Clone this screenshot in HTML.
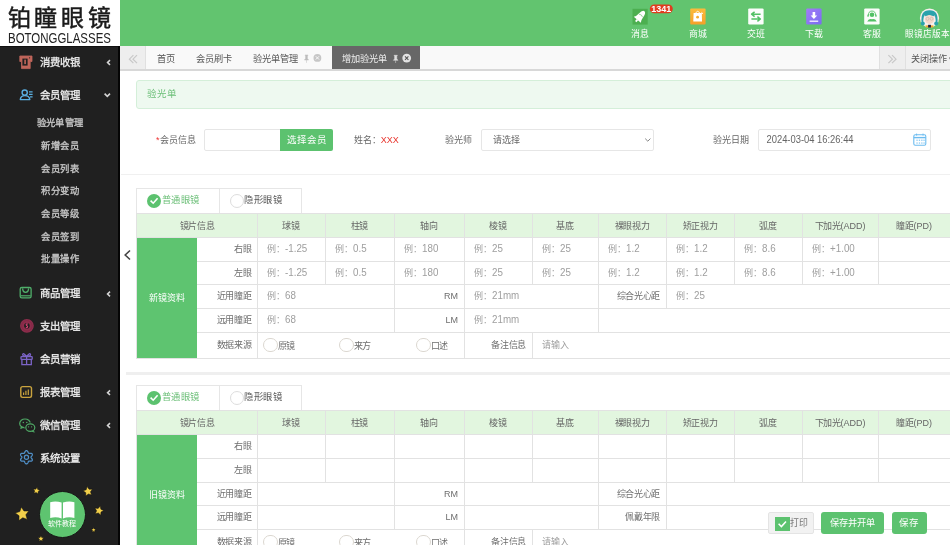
<!DOCTYPE html>
<html lang="zh-CN"><head><meta charset="utf-8">
<style>
*{box-sizing:border-box;margin:0;padding:0}
html,body{width:950px;height:545px;overflow:hidden;background:#fff;font-family:"Liberation Sans",sans-serif;position:relative}
.t{position:absolute;line-height:20px;white-space:nowrap}
.b{position:absolute}
svg{position:absolute;overflow:visible}
#wrap{position:absolute;left:0;top:0;width:950px;height:545px;overflow:hidden;will-change:transform}
</style></head><body><div id="wrap">
<div class="b" style="left:0px;top:0px;width:120px;height:46px;background:#fff"></div>
<div class="t" style="left:7.5px;top:2px;font-size:23px;line-height:32px;letter-spacing:3.9px;color:#1b1b1b;-webkit-text-stroke:0.5px #1b1b1b">铂瞳眼镜</div>
<div class="t" style="left:8px;top:31px;font-size:14.5px;line-height:14px;color:#222;transform-origin:0 0;transform:scaleX(0.79)">BOTONGGLASSES</div>
<div class="b" style="left:0px;top:46px;width:118px;height:499px;background:#202020"></div>
<div class="b" style="left:118px;top:46px;width:2px;height:499px;background:#050505"></div>
<div class="b" style="left:0px;top:46px;width:118px;height:1px;background:#111"></div>
<div class="t" style="left:39.8px;top:53.1px;font-size:10.4px;color:#e2e2e2;font-weight:bold;">消费收银</div>
<div class="t" style="left:39.8px;top:86.0px;font-size:10.4px;color:#e2e2e2;font-weight:bold;">会员管理</div>
<div class="t" style="left:-89.8px;width:300px;text-align:center;top:113.2px;font-size:9.3px;color:#c8c8c8;font-weight:400;letter-spacing:0.45px;-webkit-text-stroke:0.3px #c8c8c8">验光单管理</div>
<div class="t" style="left:-89.8px;width:300px;text-align:center;top:135.9px;font-size:9.3px;color:#c8c8c8;font-weight:400;letter-spacing:0.45px;-webkit-text-stroke:0.3px #c8c8c8">新增会员</div>
<div class="t" style="left:-89.8px;width:300px;text-align:center;top:158.6px;font-size:9.3px;color:#c8c8c8;font-weight:400;letter-spacing:0.45px;-webkit-text-stroke:0.3px #c8c8c8">会员列表</div>
<div class="t" style="left:-89.8px;width:300px;text-align:center;top:181.3px;font-size:9.3px;color:#c8c8c8;font-weight:400;letter-spacing:0.45px;-webkit-text-stroke:0.3px #c8c8c8">积分变动</div>
<div class="t" style="left:-89.8px;width:300px;text-align:center;top:204.0px;font-size:9.3px;color:#c8c8c8;font-weight:400;letter-spacing:0.45px;-webkit-text-stroke:0.3px #c8c8c8">会员等级</div>
<div class="t" style="left:-89.8px;width:300px;text-align:center;top:226.7px;font-size:9.3px;color:#c8c8c8;font-weight:400;letter-spacing:0.45px;-webkit-text-stroke:0.3px #c8c8c8">会员签到</div>
<div class="t" style="left:-89.8px;width:300px;text-align:center;top:249.39999999999998px;font-size:9.3px;color:#c8c8c8;font-weight:400;letter-spacing:0.45px;-webkit-text-stroke:0.3px #c8c8c8">批量操作</div>
<div class="t" style="left:39.8px;top:284.1px;font-size:10.4px;color:#e2e2e2;font-weight:bold;">商品管理</div>
<div class="t" style="left:39.8px;top:317.0px;font-size:10.4px;color:#e2e2e2;font-weight:bold;">支出管理</div>
<div class="t" style="left:39.8px;top:349.90000000000003px;font-size:10.4px;color:#e2e2e2;font-weight:bold;">会员营销</div>
<div class="t" style="left:39.8px;top:382.8px;font-size:10.4px;color:#e2e2e2;font-weight:bold;">报表管理</div>
<div class="t" style="left:39.8px;top:415.70000000000005px;font-size:10.4px;color:#e2e2e2;font-weight:bold;">微信管理</div>
<div class="t" style="left:39.8px;top:448.6px;font-size:10.4px;color:#e2e2e2;font-weight:bold;">系统设置</div>
<svg style="left:0;top:0" width="120" height="545"><path d="M19.8 56 H32 V61.5 H30.2 V68.6 H21.5 V61.5 H19.8 Z" fill="#bf655a" stroke="#bf655a" stroke-width="0.8" stroke-linejoin="round"/><rect x="22.4" y="58.6" width="5.2" height="7" fill="#202020"/><rect x="24.3" y="59.6" width="1.6" height="4.5" fill="#bf655a"/><circle cx="29.6" cy="57.8" r="0.6" fill="#202020"/><circle cx="24.7" cy="92.6" r="2.6" fill="none" stroke="#5aaee0" stroke-width="1.4"/><path d="M20.3 99.6 Q20.6 95.6 24.9 95.6 Q29.4 95.6 29.8 99.6 Z" fill="none" stroke="#5aaee0" stroke-width="1.4" stroke-linejoin="round"/><path d="M29 91.8 H32.6 M29 94.4 H32.6 M30 96.8 H32.6" stroke="#5aaee0" stroke-width="1.2"/><path d="M110 60.2 L107.6 62.5 L110 64.8" fill="none" stroke="#d4d4d4" stroke-width="1.6"/><path d="M110 291.7 L107.6 294 L110 296.3" fill="none" stroke="#d4d4d4" stroke-width="1.6"/><path d="M110 390.4 L107.6 392.7 L110 395.0" fill="none" stroke="#d4d4d4" stroke-width="1.6"/><path d="M110 423.2 L107.6 425.5 L110 427.8" fill="none" stroke="#d4d4d4" stroke-width="1.6"/><path d="M104.6 93.6 L107.3 96.4 L110 93.6" fill="none" stroke="#d4d4d4" stroke-width="1.6"/><rect x="20.2" y="287.5" width="10.9" height="10.4" rx="1.6" fill="none" stroke="#4fae6a" stroke-width="1.3"/><path d="M22.6 288.4 Q22.8 292.3 25.6 292.3 Q28.4 292.3 28.6 288.4" fill="none" stroke="#4fae6a" stroke-width="1.3"/><path d="M20.8 295.8 H30.6" stroke="#4fae6a" stroke-width="1.2"/><circle cx="26.9" cy="325.8" r="6.9" fill="#8e2d4c"/><circle cx="26.9" cy="325.8" r="5.2" fill="none" stroke="#7a2642" stroke-width="0.6"/><circle cx="26.9" cy="325.8" r="2.8" fill="#202020"/><path d="M27.8 324.2 Q26.9 323.6 26.2 324.3 Q26 325.4 27.2 325.9 Q28 326.6 27.4 327.4 Q26.6 327.9 25.9 327.3" fill="none" stroke="#d04070" stroke-width="1.1"/><rect x="21" y="356.6" width="11.2" height="2.8" rx="0.6" fill="none" stroke="#7c64c8" stroke-width="1.3"/><path d="M21.9 359.4 V364.6 H31.3 V359.4 M26.6 356.6 V364.6" fill="none" stroke="#7c64c8" stroke-width="1.3"/><path d="M26.6 356.4 Q23.2 352.2 22.6 354.6 Q22.4 356 26.6 356.4 Q30.8 356 30.6 354.6 Q30 352.2 26.6 356.4" fill="none" stroke="#7c64c8" stroke-width="1.2"/><rect x="20.8" y="386.6" width="10.7" height="10.8" rx="1.8" fill="none" stroke="#c9a33e" stroke-width="1.4"/><path d="M23.6 395 V392.4 M25.9 395 V390.8 M28.3 395 V389.4" stroke="#c9a33e" stroke-width="1.2"/><ellipse cx="25" cy="423.4" rx="5.3" ry="4.4" fill="none" stroke="#4fa865" stroke-width="1.2"/><path d="M21.4 426.4 L20.6 428.6 L23.4 427.4" fill="#4fa865" stroke="#4fa865" stroke-width="0.8" stroke-linejoin="round"/><circle cx="23.3" cy="422.6" r="0.75" fill="#4fa865"/><circle cx="26.8" cy="422.6" r="0.75" fill="#4fa865"/><ellipse cx="30.3" cy="427.6" rx="4.5" ry="3.8" fill="#202020" stroke="#202020" stroke-width="2.6"/><ellipse cx="30.3" cy="427.6" rx="4.5" ry="3.8" fill="none" stroke="#4fa865" stroke-width="1.2"/><path d="M33 430.4 L34.4 432.2 L31.8 431.2" fill="#4fa865" stroke="#4fa865" stroke-width="0.7" stroke-linejoin="round"/><circle cx="28.6" cy="426.8" r="0.6" fill="#4fa865"/><circle cx="31.6" cy="426.8" r="0.6" fill="#4fa865"/><path d="M26.45 463.85 L26.28 463.84 L26.11 463.79 L25.94 463.72 L25.78 463.62 L25.63 463.50 L25.48 463.36 L25.35 463.20 L25.22 463.03 L25.11 462.85 L25.00 462.66 L24.90 462.47 L24.81 462.28 L24.73 462.10 L24.65 461.93 L24.58 461.77 L24.50 461.63 L24.42 461.50 L24.34 461.39 L24.25 461.30 L24.15 461.23 L24.04 461.18 L23.92 461.15 L23.78 461.13 L23.63 461.13 L23.47 461.13 L23.30 461.15 L23.11 461.16 L22.91 461.18 L22.70 461.20 L22.49 461.21 L22.27 461.21 L22.06 461.20 L21.85 461.18 L21.64 461.14 L21.45 461.09 L21.26 461.02 L21.10 460.93 L20.96 460.82 L20.83 460.69 L20.73 460.55 L20.66 460.39 L20.61 460.22 L20.59 460.04 L20.60 459.86 L20.62 459.66 L20.67 459.47 L20.74 459.27 L20.83 459.08 L20.93 458.88 L21.04 458.70 L21.16 458.52 L21.27 458.35 L21.39 458.19 L21.50 458.03 L21.60 457.89 L21.69 457.75 L21.76 457.62 L21.81 457.49 L21.84 457.37 L21.85 457.25 L21.84 457.13 L21.81 457.01 L21.76 456.88 L21.69 456.75 L21.60 456.61 L21.50 456.47 L21.39 456.31 L21.27 456.15 L21.16 455.98 L21.04 455.80 L20.93 455.62 L20.83 455.42 L20.74 455.23 L20.67 455.03 L20.62 454.84 L20.60 454.64 L20.59 454.46 L20.61 454.28 L20.66 454.11 L20.73 453.95 L20.83 453.81 L20.96 453.68 L21.10 453.57 L21.26 453.48 L21.45 453.41 L21.64 453.36 L21.85 453.32 L22.06 453.30 L22.27 453.29 L22.49 453.29 L22.70 453.30 L22.91 453.32 L23.11 453.34 L23.30 453.35 L23.47 453.37 L23.63 453.37 L23.78 453.37 L23.92 453.35 L24.04 453.32 L24.15 453.27 L24.25 453.20 L24.34 453.11 L24.42 453.00 L24.50 452.87 L24.58 452.73 L24.65 452.57 L24.73 452.40 L24.81 452.22 L24.90 452.03 L25.00 451.84 L25.11 451.65 L25.22 451.47 L25.35 451.30 L25.48 451.14 L25.63 451.00 L25.78 450.88 L25.94 450.78 L26.11 450.71 L26.28 450.66 L26.45 450.65 L26.62 450.66 L26.79 450.71 L26.96 450.78 L27.12 450.88 L27.27 451.00 L27.42 451.14 L27.55 451.30 L27.68 451.47 L27.79 451.65 L27.90 451.84 L28.00 452.03 L28.09 452.22 L28.17 452.40 L28.25 452.57 L28.32 452.73 L28.40 452.87 L28.48 453.00 L28.56 453.11 L28.65 453.20 L28.75 453.27 L28.86 453.32 L28.98 453.35 L29.12 453.37 L29.27 453.37 L29.43 453.37 L29.60 453.35 L29.79 453.34 L29.99 453.32 L30.20 453.30 L30.41 453.29 L30.63 453.29 L30.84 453.30 L31.05 453.32 L31.26 453.36 L31.45 453.41 L31.64 453.48 L31.80 453.57 L31.94 453.68 L32.07 453.81 L32.17 453.95 L32.24 454.11 L32.29 454.28 L32.31 454.46 L32.30 454.64 L32.28 454.84 L32.23 455.03 L32.16 455.23 L32.07 455.42 L31.97 455.62 L31.86 455.80 L31.74 455.98 L31.63 456.15 L31.51 456.31 L31.40 456.47 L31.30 456.61 L31.21 456.75 L31.14 456.88 L31.09 457.01 L31.06 457.13 L31.05 457.25 L31.06 457.37 L31.09 457.49 L31.14 457.62 L31.21 457.75 L31.30 457.89 L31.40 458.03 L31.51 458.19 L31.63 458.35 L31.74 458.52 L31.86 458.70 L31.97 458.88 L32.07 459.08 L32.16 459.27 L32.23 459.47 L32.28 459.66 L32.30 459.86 L32.31 460.04 L32.29 460.22 L32.24 460.39 L32.17 460.55 L32.07 460.69 L31.94 460.82 L31.80 460.93 L31.64 461.02 L31.45 461.09 L31.26 461.14 L31.05 461.18 L30.84 461.20 L30.63 461.21 L30.41 461.21 L30.20 461.20 L29.99 461.18 L29.79 461.16 L29.60 461.15 L29.43 461.13 L29.27 461.13 L29.12 461.13 L28.98 461.15 L28.86 461.18 L28.75 461.23 L28.65 461.30 L28.56 461.39 L28.48 461.50 L28.40 461.63 L28.32 461.77 L28.25 461.93 L28.17 462.10 L28.09 462.28 L28.00 462.47 L27.90 462.66 L27.79 462.85 L27.68 463.03 L27.55 463.20 L27.42 463.36 L27.27 463.50 L27.12 463.62 L26.96 463.72 L26.79 463.79 L26.62 463.84 Z" fill="none" stroke="#5090c8" stroke-width="1.3"/><circle cx="26.45" cy="457.25" r="2.1" fill="none" stroke="#5090c8" stroke-width="1.2"/></svg>
<div class="b" style="left:120px;top:0px;width:830px;height:46px;background:#62c46f"></div>
<div class="t" style="left:490px;width:300px;text-align:center;top:23.799999999999997px;font-size:8.9px;color:#fff;font-weight:400;">消息</div>
<div class="t" style="left:548px;width:300px;text-align:center;top:23.799999999999997px;font-size:8.9px;color:#fff;font-weight:400;">商城</div>
<div class="t" style="left:606px;width:300px;text-align:center;top:23.799999999999997px;font-size:8.9px;color:#fff;font-weight:400;">交班</div>
<div class="t" style="left:664px;width:300px;text-align:center;top:23.799999999999997px;font-size:8.9px;color:#fff;font-weight:400;">下载</div>
<div class="t" style="left:722px;width:300px;text-align:center;top:23.799999999999997px;font-size:8.9px;color:#fff;font-weight:400;">客服</div>
<div class="t" style="left:777px;width:300px;text-align:center;top:23.799999999999997px;font-size:8.6px;color:#fff;font-weight:400;">眼镜店版本</div>
<div class="b" style="left:120px;top:46px;width:830px;height:23px;background:#f9f9f9"></div>
<div class="b" style="left:120px;top:69px;width:830px;height:2px;background:#d8d8d8"></div>
<div class="b" style="left:120px;top:46px;width:26px;height:23px;background:#eeeeee;border-right:1px solid #e0e0e0"></div>
<div class="b" style="left:879px;top:46px;width:27px;height:23px;background:#eeeeee;border-left:1px solid #e0e0e0;border-right:1px solid #e0e0e0"></div>
<div class="b" style="left:906px;top:46px;width:44px;height:23px;background:#f0f0f0"></div>
<div class="b" style="left:332px;top:46px;width:88px;height:23px;background:#676767"></div>
<div class="t" style="left:157px;top:48.6px;font-size:9.2px;color:#555;font-weight:400;">首页</div>
<div class="t" style="left:195.5px;top:48.6px;font-size:9.2px;color:#555;font-weight:400;">会员刷卡</div>
<div class="t" style="left:252.5px;top:48.6px;font-size:9.2px;color:#555;font-weight:400;">验光单管理</div>
<div class="t" style="left:341.8px;top:48.6px;font-size:9.2px;color:#eee;font-weight:400;">增加验光单</div>
<div class="t" style="left:910.5px;top:48.8px;font-size:9.1px;color:#555;font-weight:400;">关闭操作 ▾</div>
<div class="b" style="left:136px;top:80px;width:824px;height:29px;background:#eef9f0;border:1px solid #d4efd9;border-radius:3px"></div>
<div class="t" style="left:147.2px;top:84.0px;font-size:9.5px;color:#6cbf78;font-weight:400;">验光单</div>
<div class="t" style="left:156px;top:129.5px;font-size:9px;color:#666;font-weight:400;"><span style="color:#e33">*</span>会员信息</div>
<div class="b" style="left:204px;top:129px;width:77px;height:22px;background:#fff;border:1px solid #e6e6e6;border-radius:2px 0 0 2px"></div>
<div class="b" style="left:280px;top:129px;width:53px;height:22px;background:#5cc26f;border-radius:0 2px 2px 0"></div>
<div class="t" style="left:156.5px;width:300px;text-align:center;top:130.0px;font-size:9.5px;color:#fff;font-weight:400;">选择会员</div>
<div class="t" style="left:353.7px;top:129.5px;font-size:9px;color:#666;font-weight:400;">姓名：<span style="color:#e8332b">XXX</span></div>
<div class="t" style="left:445.3px;top:129.5px;font-size:9px;color:#666;font-weight:400;">验光师</div>
<div class="b" style="left:481px;top:129px;width:173px;height:22px;background:#fff;border:1px solid #e6e6e6;border-radius:2px"></div>
<div class="t" style="left:492.6px;top:130.0px;font-size:9px;color:#666;font-weight:400;">请选择</div>
<div class="t" style="left:712.6px;top:129.5px;font-size:9px;color:#666;font-weight:400;">验光日期</div>
<div class="b" style="left:758px;top:129px;width:173px;height:22px;background:#fff;border:1px solid #e6e6e6;border-radius:2px"></div>
<div class="t" style="left:766.5px;top:130.0px;font-size:9.4px;color:#666;font-weight:400;"><span style="display:inline-block;transform:scale(1,1.14);transform-origin:0 75%">2024-03-04 16:26:44</span></div>
<div class="b" style="left:121px;top:174px;width:829px;height:1px;background:#f0f0f0"></div>
<div class="b" style="left:126px;top:372px;width:824px;height:3px;background:#efefef"></div>
<div class="b" style="left:136px;top:188px;width:166px;height:25px;border:1px solid #e6e6e6;border-bottom:none;background:#fff"></div>
<div class="b" style="left:219px;top:188px;width:1px;height:25px;background:#e6e6e6"></div>
<div class="t" style="left:161.8px;top:190.0px;font-size:9.3px;color:#6cbf78;font-weight:400;letter-spacing:0.5px">普通眼镜</div>
<div class="t" style="left:244.4px;top:190.0px;font-size:9.3px;color:#555;font-weight:400;letter-spacing:0.5px">隐形眼镜</div>
<div class="b" style="left:147px;top:193.5px;width:14px;height:14.0px;background:#5cc26f;border-radius:50%"></div>
<div class="b" style="left:229.5px;top:193.5px;width:14.0px;height:14.0px;border:1px solid #ddd;border-radius:50%;background:#fff"></div>
<svg style="left:0;top:0" width="950" height="545"><path d="M150.6 200.6 L153.2 203.2 L157.6 198.2" fill="none" stroke="#fff" stroke-width="1.6"/></svg>
<div class="b" style="left:137px;top:213px;width:813px;height:24px;background:#e2f6df"></div>
<div class="b" style="left:137px;top:213px;width:813px;height:1px;background:#e2e2e2"></div>
<div class="t" style="left:47.0px;width:300px;text-align:center;top:216.0px;font-size:9px;color:#666;font-weight:400;letter-spacing:-0.35px">镜片信息</div>
<div class="t" style="left:141.0px;width:300px;text-align:center;top:216.0px;font-size:9px;color:#666;font-weight:400;letter-spacing:-0.35px">球镜</div>
<div class="t" style="left:209.5px;width:300px;text-align:center;top:216.0px;font-size:9px;color:#666;font-weight:400;letter-spacing:-0.35px">柱镜</div>
<div class="t" style="left:279.0px;width:300px;text-align:center;top:216.0px;font-size:9px;color:#666;font-weight:400;letter-spacing:-0.35px">轴向</div>
<div class="t" style="left:348.0px;width:300px;text-align:center;top:216.0px;font-size:9px;color:#666;font-weight:400;letter-spacing:-0.35px">棱镜</div>
<div class="t" style="left:415.0px;width:300px;text-align:center;top:216.0px;font-size:9px;color:#666;font-weight:400;letter-spacing:-0.35px">基底</div>
<div class="t" style="left:482.0px;width:300px;text-align:center;top:216.0px;font-size:9px;color:#666;font-weight:400;letter-spacing:-0.35px">裸眼视力</div>
<div class="t" style="left:550.0px;width:300px;text-align:center;top:216.0px;font-size:9px;color:#666;font-weight:400;letter-spacing:-0.35px">矫正视力</div>
<div class="t" style="left:618.0px;width:300px;text-align:center;top:216.0px;font-size:9px;color:#666;font-weight:400;letter-spacing:-0.35px">弧度</div>
<div class="t" style="left:690.0px;width:300px;text-align:center;top:216.0px;font-size:9px;color:#666;font-weight:400;letter-spacing:-0.35px">下加光<span style="letter-spacing:0">(ADD)</span></div>
<div class="t" style="left:764.0px;width:300px;text-align:center;top:216.0px;font-size:9px;color:#666;font-weight:400;letter-spacing:-0.35px">瞳距<span style="letter-spacing:0">(PD)</span></div>
<div class="b" style="left:137px;top:237px;width:813px;height:1px;background:#e2e2e2"></div>
<div class="b" style="left:197px;top:261px;width:753px;height:1px;background:#e2e2e2"></div>
<div class="b" style="left:197px;top:284px;width:753px;height:1px;background:#e2e2e2"></div>
<div class="b" style="left:197px;top:308px;width:753px;height:1px;background:#e2e2e2"></div>
<div class="b" style="left:197px;top:332px;width:753px;height:1px;background:#e2e2e2"></div>
<div class="b" style="left:137px;top:358px;width:813px;height:1px;background:#e2e2e2"></div>
<div class="b" style="left:257px;top:213px;width:1px;height:24px;background:#e2e2e2"></div>
<div class="b" style="left:325px;top:213px;width:1px;height:24px;background:#e2e2e2"></div>
<div class="b" style="left:394px;top:213px;width:1px;height:24px;background:#e2e2e2"></div>
<div class="b" style="left:464px;top:213px;width:1px;height:24px;background:#e2e2e2"></div>
<div class="b" style="left:532px;top:213px;width:1px;height:24px;background:#e2e2e2"></div>
<div class="b" style="left:598px;top:213px;width:1px;height:24px;background:#e2e2e2"></div>
<div class="b" style="left:666px;top:213px;width:1px;height:24px;background:#e2e2e2"></div>
<div class="b" style="left:734px;top:213px;width:1px;height:24px;background:#e2e2e2"></div>
<div class="b" style="left:802px;top:213px;width:1px;height:24px;background:#e2e2e2"></div>
<div class="b" style="left:878px;top:213px;width:1px;height:24px;background:#e2e2e2"></div>
<div class="b" style="left:136px;top:213px;width:1px;height:146px;background:#e2e2e2"></div>
<div class="b" style="left:137px;top:238px;width:60px;height:120px;background:#5ec470"></div>
<div class="t" style="left:17px;width:300px;text-align:center;top:287.5px;font-size:9px;color:#fff;font-weight:400;">新镜资料</div>
<div class="t" style="left:-48.80000000000001px;width:300px;text-align:right;top:239.4px;font-size:9px;color:#6e6e6e;font-weight:400;letter-spacing:-0.35px">右眼</div>
<div class="t" style="left:-48.80000000000001px;width:300px;text-align:right;top:262.9px;font-size:9px;color:#6e6e6e;font-weight:400;letter-spacing:-0.35px">左眼</div>
<div class="t" style="left:-48.80000000000001px;width:300px;text-align:right;top:286.4px;font-size:9px;color:#6e6e6e;font-weight:400;letter-spacing:-0.35px">近用瞳距</div>
<div class="t" style="left:-48.80000000000001px;width:300px;text-align:right;top:310.4px;font-size:9px;color:#6e6e6e;font-weight:400;letter-spacing:-0.35px">远用瞳距</div>
<div class="t" style="left:-48.80000000000001px;width:300px;text-align:right;top:335.4px;font-size:9px;color:#6e6e6e;font-weight:400;letter-spacing:-0.35px">数据来源</div>
<div class="b" style="left:257px;top:237px;width:1px;height:24px;background:#e2e2e2"></div>
<div class="b" style="left:325px;top:237px;width:1px;height:24px;background:#e2e2e2"></div>
<div class="b" style="left:394px;top:237px;width:1px;height:24px;background:#e2e2e2"></div>
<div class="b" style="left:464px;top:237px;width:1px;height:24px;background:#e2e2e2"></div>
<div class="b" style="left:532px;top:237px;width:1px;height:24px;background:#e2e2e2"></div>
<div class="b" style="left:598px;top:237px;width:1px;height:24px;background:#e2e2e2"></div>
<div class="b" style="left:666px;top:237px;width:1px;height:24px;background:#e2e2e2"></div>
<div class="b" style="left:734px;top:237px;width:1px;height:24px;background:#e2e2e2"></div>
<div class="b" style="left:802px;top:237px;width:1px;height:24px;background:#e2e2e2"></div>
<div class="b" style="left:878px;top:237px;width:1px;height:24px;background:#e2e2e2"></div>
<div class="t" style="left:266.5px;top:239.0px;font-size:9px;color:#9e9e9e;font-weight:400;">例：<span style="font-size:9.6px;margin-left:0.8px;display:inline-block;transform:scale(1.02,1.14);transform-origin:0 75%">-1.25</span></div>
<div class="t" style="left:334.5px;top:239.0px;font-size:9px;color:#9e9e9e;font-weight:400;">例：<span style="font-size:9.6px;margin-left:0.8px;display:inline-block;transform:scale(1.02,1.14);transform-origin:0 75%">0.5</span></div>
<div class="t" style="left:403.5px;top:239.0px;font-size:9px;color:#9e9e9e;font-weight:400;">例：<span style="font-size:9.6px;margin-left:0.8px;display:inline-block;transform:scale(1.02,1.14);transform-origin:0 75%">180</span></div>
<div class="t" style="left:473.5px;top:239.0px;font-size:9px;color:#9e9e9e;font-weight:400;">例：<span style="font-size:9.6px;margin-left:0.8px;display:inline-block;transform:scale(1.02,1.14);transform-origin:0 75%">25</span></div>
<div class="t" style="left:541.5px;top:239.0px;font-size:9px;color:#9e9e9e;font-weight:400;">例：<span style="font-size:9.6px;margin-left:0.8px;display:inline-block;transform:scale(1.02,1.14);transform-origin:0 75%">25</span></div>
<div class="t" style="left:607.5px;top:239.0px;font-size:9px;color:#9e9e9e;font-weight:400;">例：<span style="font-size:9.6px;margin-left:0.8px;display:inline-block;transform:scale(1.02,1.14);transform-origin:0 75%">1.2</span></div>
<div class="t" style="left:675.5px;top:239.0px;font-size:9px;color:#9e9e9e;font-weight:400;">例：<span style="font-size:9.6px;margin-left:0.8px;display:inline-block;transform:scale(1.02,1.14);transform-origin:0 75%">1.2</span></div>
<div class="t" style="left:743.5px;top:239.0px;font-size:9px;color:#9e9e9e;font-weight:400;">例：<span style="font-size:9.6px;margin-left:0.8px;display:inline-block;transform:scale(1.02,1.14);transform-origin:0 75%">8.6</span></div>
<div class="t" style="left:811.5px;top:239.0px;font-size:9px;color:#9e9e9e;font-weight:400;">例：<span style="font-size:9.6px;margin-left:0.8px;display:inline-block;transform:scale(1.02,1.14);transform-origin:0 75%">+1.00</span></div>
<div class="b" style="left:257px;top:261px;width:1px;height:23px;background:#e2e2e2"></div>
<div class="b" style="left:325px;top:261px;width:1px;height:23px;background:#e2e2e2"></div>
<div class="b" style="left:394px;top:261px;width:1px;height:23px;background:#e2e2e2"></div>
<div class="b" style="left:464px;top:261px;width:1px;height:23px;background:#e2e2e2"></div>
<div class="b" style="left:532px;top:261px;width:1px;height:23px;background:#e2e2e2"></div>
<div class="b" style="left:598px;top:261px;width:1px;height:23px;background:#e2e2e2"></div>
<div class="b" style="left:666px;top:261px;width:1px;height:23px;background:#e2e2e2"></div>
<div class="b" style="left:734px;top:261px;width:1px;height:23px;background:#e2e2e2"></div>
<div class="b" style="left:802px;top:261px;width:1px;height:23px;background:#e2e2e2"></div>
<div class="b" style="left:878px;top:261px;width:1px;height:23px;background:#e2e2e2"></div>
<div class="t" style="left:266.5px;top:262.5px;font-size:9px;color:#9e9e9e;font-weight:400;">例：<span style="font-size:9.6px;margin-left:0.8px;display:inline-block;transform:scale(1.02,1.14);transform-origin:0 75%">-1.25</span></div>
<div class="t" style="left:334.5px;top:262.5px;font-size:9px;color:#9e9e9e;font-weight:400;">例：<span style="font-size:9.6px;margin-left:0.8px;display:inline-block;transform:scale(1.02,1.14);transform-origin:0 75%">0.5</span></div>
<div class="t" style="left:403.5px;top:262.5px;font-size:9px;color:#9e9e9e;font-weight:400;">例：<span style="font-size:9.6px;margin-left:0.8px;display:inline-block;transform:scale(1.02,1.14);transform-origin:0 75%">180</span></div>
<div class="t" style="left:473.5px;top:262.5px;font-size:9px;color:#9e9e9e;font-weight:400;">例：<span style="font-size:9.6px;margin-left:0.8px;display:inline-block;transform:scale(1.02,1.14);transform-origin:0 75%">25</span></div>
<div class="t" style="left:541.5px;top:262.5px;font-size:9px;color:#9e9e9e;font-weight:400;">例：<span style="font-size:9.6px;margin-left:0.8px;display:inline-block;transform:scale(1.02,1.14);transform-origin:0 75%">25</span></div>
<div class="t" style="left:607.5px;top:262.5px;font-size:9px;color:#9e9e9e;font-weight:400;">例：<span style="font-size:9.6px;margin-left:0.8px;display:inline-block;transform:scale(1.02,1.14);transform-origin:0 75%">1.2</span></div>
<div class="t" style="left:675.5px;top:262.5px;font-size:9px;color:#9e9e9e;font-weight:400;">例：<span style="font-size:9.6px;margin-left:0.8px;display:inline-block;transform:scale(1.02,1.14);transform-origin:0 75%">1.2</span></div>
<div class="t" style="left:743.5px;top:262.5px;font-size:9px;color:#9e9e9e;font-weight:400;">例：<span style="font-size:9.6px;margin-left:0.8px;display:inline-block;transform:scale(1.02,1.14);transform-origin:0 75%">8.6</span></div>
<div class="t" style="left:811.5px;top:262.5px;font-size:9px;color:#9e9e9e;font-weight:400;">例：<span style="font-size:9.6px;margin-left:0.8px;display:inline-block;transform:scale(1.02,1.14);transform-origin:0 75%">+1.00</span></div>
<div class="b" style="left:257px;top:284px;width:1px;height:24px;background:#e2e2e2"></div>
<div class="b" style="left:394px;top:284px;width:1px;height:24px;background:#e2e2e2"></div>
<div class="b" style="left:464px;top:284px;width:1px;height:24px;background:#e2e2e2"></div>
<div class="b" style="left:598px;top:284px;width:1px;height:24px;background:#e2e2e2"></div>
<div class="b" style="left:666px;top:284px;width:1px;height:24px;background:#e2e2e2"></div>
<div class="t" style="left:158px;width:300px;text-align:right;top:286.0px;font-size:9px;color:#6e6e6e;font-weight:400;">RM</div>
<div class="t" style="left:360px;width:300px;text-align:right;top:286.4px;font-size:9px;color:#6e6e6e;font-weight:400;letter-spacing:-0.35px">综合光心距</div>
<div class="t" style="left:266.5px;top:286.0px;font-size:9px;color:#9e9e9e;font-weight:400;">例：<span style="font-size:9.6px;margin-left:0.8px;display:inline-block;transform:scale(1.02,1.14);transform-origin:0 75%">68</span></div>
<div class="t" style="left:473.5px;top:286.0px;font-size:9px;color:#9e9e9e;font-weight:400;">例：<span style="font-size:9.6px;margin-left:0.8px;display:inline-block;transform:scale(1.02,1.14);transform-origin:0 75%">21mm</span></div>
<div class="t" style="left:675.5px;top:286.0px;font-size:9px;color:#9e9e9e;font-weight:400;">例：<span style="font-size:9.6px;margin-left:0.8px;display:inline-block;transform:scale(1.02,1.14);transform-origin:0 75%">25</span></div>
<div class="b" style="left:257px;top:308px;width:1px;height:24px;background:#e2e2e2"></div>
<div class="b" style="left:394px;top:308px;width:1px;height:24px;background:#e2e2e2"></div>
<div class="b" style="left:464px;top:308px;width:1px;height:24px;background:#e2e2e2"></div>
<div class="b" style="left:598px;top:308px;width:1px;height:24px;background:#e2e2e2"></div>
<div class="t" style="left:158px;width:300px;text-align:right;top:310.0px;font-size:9px;color:#6e6e6e;font-weight:400;">LM</div>
<div class="t" style="left:266.5px;top:310.0px;font-size:9px;color:#9e9e9e;font-weight:400;">例：<span style="font-size:9.6px;margin-left:0.8px;display:inline-block;transform:scale(1.02,1.14);transform-origin:0 75%">68</span></div>
<div class="t" style="left:473.5px;top:310.0px;font-size:9px;color:#9e9e9e;font-weight:400;">例：<span style="font-size:9.6px;margin-left:0.8px;display:inline-block;transform:scale(1.02,1.14);transform-origin:0 75%">21mm</span></div>
<div class="b" style="left:257px;top:332px;width:1px;height:26px;background:#e2e2e2"></div>
<div class="b" style="left:464px;top:332px;width:1px;height:26px;background:#e2e2e2"></div>
<div class="b" style="left:532px;top:332px;width:1px;height:26px;background:#e2e2e2"></div>
<div class="b" style="left:263px;top:337.8px;width:14.5px;height:14.5px;border:1px solid #dbd7d0;border-radius:50%"></div>
<div class="t" style="left:277.5px;top:335.6px;font-size:9px;color:#6e6e6e;font-weight:400;letter-spacing:-0.35px">原镜</div>
<div class="b" style="left:339px;top:337.8px;width:14.5px;height:14.5px;border:1px solid #dbd7d0;border-radius:50%"></div>
<div class="t" style="left:353.5px;top:335.6px;font-size:9px;color:#6e6e6e;font-weight:400;letter-spacing:-0.35px">来方</div>
<div class="b" style="left:416px;top:337.8px;width:14.5px;height:14.5px;border:1px solid #dbd7d0;border-radius:50%"></div>
<div class="t" style="left:430.5px;top:335.6px;font-size:9px;color:#6e6e6e;font-weight:400;letter-spacing:-0.35px">口述</div>
<div class="t" style="left:226px;width:300px;text-align:right;top:335.4px;font-size:9px;color:#6e6e6e;font-weight:400;letter-spacing:-0.35px">备注信息</div>
<div class="t" style="left:541.5px;top:335.0px;font-size:9px;color:#9e9e9e;font-weight:400;">请输入</div>
<div class="b" style="left:136px;top:385px;width:166px;height:25px;border:1px solid #e6e6e6;border-bottom:none;background:#fff"></div>
<div class="b" style="left:219px;top:385px;width:1px;height:25px;background:#e6e6e6"></div>
<div class="t" style="left:161.8px;top:387.0px;font-size:9.3px;color:#6cbf78;font-weight:400;letter-spacing:0.5px">普通眼镜</div>
<div class="t" style="left:244.4px;top:387.0px;font-size:9.3px;color:#555;font-weight:400;letter-spacing:0.5px">隐形眼镜</div>
<div class="b" style="left:147px;top:390.5px;width:14px;height:14.0px;background:#5cc26f;border-radius:50%"></div>
<div class="b" style="left:229.5px;top:390.5px;width:14.0px;height:14.0px;border:1px solid #ddd;border-radius:50%;background:#fff"></div>
<svg style="left:0;top:0" width="950" height="545"><path d="M150.6 397.6 L153.2 400.2 L157.6 395.2" fill="none" stroke="#fff" stroke-width="1.6"/></svg>
<div class="b" style="left:137px;top:410px;width:813px;height:24px;background:#e2f6df"></div>
<div class="b" style="left:137px;top:410px;width:813px;height:1px;background:#e2e2e2"></div>
<div class="t" style="left:47.0px;width:300px;text-align:center;top:413.0px;font-size:9px;color:#666;font-weight:400;letter-spacing:-0.35px">镜片信息</div>
<div class="t" style="left:141.0px;width:300px;text-align:center;top:413.0px;font-size:9px;color:#666;font-weight:400;letter-spacing:-0.35px">球镜</div>
<div class="t" style="left:209.5px;width:300px;text-align:center;top:413.0px;font-size:9px;color:#666;font-weight:400;letter-spacing:-0.35px">柱镜</div>
<div class="t" style="left:279.0px;width:300px;text-align:center;top:413.0px;font-size:9px;color:#666;font-weight:400;letter-spacing:-0.35px">轴向</div>
<div class="t" style="left:348.0px;width:300px;text-align:center;top:413.0px;font-size:9px;color:#666;font-weight:400;letter-spacing:-0.35px">棱镜</div>
<div class="t" style="left:415.0px;width:300px;text-align:center;top:413.0px;font-size:9px;color:#666;font-weight:400;letter-spacing:-0.35px">基底</div>
<div class="t" style="left:482.0px;width:300px;text-align:center;top:413.0px;font-size:9px;color:#666;font-weight:400;letter-spacing:-0.35px">裸眼视力</div>
<div class="t" style="left:550.0px;width:300px;text-align:center;top:413.0px;font-size:9px;color:#666;font-weight:400;letter-spacing:-0.35px">矫正视力</div>
<div class="t" style="left:618.0px;width:300px;text-align:center;top:413.0px;font-size:9px;color:#666;font-weight:400;letter-spacing:-0.35px">弧度</div>
<div class="t" style="left:690.0px;width:300px;text-align:center;top:413.0px;font-size:9px;color:#666;font-weight:400;letter-spacing:-0.35px">下加光<span style="letter-spacing:0">(ADD)</span></div>
<div class="t" style="left:764.0px;width:300px;text-align:center;top:413.0px;font-size:9px;color:#666;font-weight:400;letter-spacing:-0.35px">瞳距<span style="letter-spacing:0">(PD)</span></div>
<div class="b" style="left:137px;top:434px;width:813px;height:1px;background:#e2e2e2"></div>
<div class="b" style="left:197px;top:458px;width:753px;height:1px;background:#e2e2e2"></div>
<div class="b" style="left:197px;top:482px;width:753px;height:1px;background:#e2e2e2"></div>
<div class="b" style="left:197px;top:505px;width:753px;height:1px;background:#e2e2e2"></div>
<div class="b" style="left:197px;top:529px;width:753px;height:1px;background:#e2e2e2"></div>
<div class="b" style="left:137px;top:555px;width:813px;height:1px;background:#e2e2e2"></div>
<div class="b" style="left:257px;top:410px;width:1px;height:24px;background:#e2e2e2"></div>
<div class="b" style="left:325px;top:410px;width:1px;height:24px;background:#e2e2e2"></div>
<div class="b" style="left:394px;top:410px;width:1px;height:24px;background:#e2e2e2"></div>
<div class="b" style="left:464px;top:410px;width:1px;height:24px;background:#e2e2e2"></div>
<div class="b" style="left:532px;top:410px;width:1px;height:24px;background:#e2e2e2"></div>
<div class="b" style="left:598px;top:410px;width:1px;height:24px;background:#e2e2e2"></div>
<div class="b" style="left:666px;top:410px;width:1px;height:24px;background:#e2e2e2"></div>
<div class="b" style="left:734px;top:410px;width:1px;height:24px;background:#e2e2e2"></div>
<div class="b" style="left:802px;top:410px;width:1px;height:24px;background:#e2e2e2"></div>
<div class="b" style="left:878px;top:410px;width:1px;height:24px;background:#e2e2e2"></div>
<div class="b" style="left:136px;top:410px;width:1px;height:146px;background:#e2e2e2"></div>
<div class="b" style="left:137px;top:435px;width:60px;height:120px;background:#5ec470"></div>
<div class="t" style="left:17px;width:300px;text-align:center;top:484.5px;font-size:9px;color:#fff;font-weight:400;">旧镜资料</div>
<div class="t" style="left:-48.80000000000001px;width:300px;text-align:right;top:436.4px;font-size:9px;color:#6e6e6e;font-weight:400;letter-spacing:-0.35px">右眼</div>
<div class="t" style="left:-48.80000000000001px;width:300px;text-align:right;top:460.4px;font-size:9px;color:#6e6e6e;font-weight:400;letter-spacing:-0.35px">左眼</div>
<div class="t" style="left:-48.80000000000001px;width:300px;text-align:right;top:483.9px;font-size:9px;color:#6e6e6e;font-weight:400;letter-spacing:-0.35px">近用瞳距</div>
<div class="t" style="left:-48.80000000000001px;width:300px;text-align:right;top:507.4px;font-size:9px;color:#6e6e6e;font-weight:400;letter-spacing:-0.35px">远用瞳距</div>
<div class="t" style="left:-48.80000000000001px;width:300px;text-align:right;top:532.4px;font-size:9px;color:#6e6e6e;font-weight:400;letter-spacing:-0.35px">数据来源</div>
<div class="b" style="left:257px;top:434px;width:1px;height:24px;background:#e2e2e2"></div>
<div class="b" style="left:325px;top:434px;width:1px;height:24px;background:#e2e2e2"></div>
<div class="b" style="left:394px;top:434px;width:1px;height:24px;background:#e2e2e2"></div>
<div class="b" style="left:464px;top:434px;width:1px;height:24px;background:#e2e2e2"></div>
<div class="b" style="left:532px;top:434px;width:1px;height:24px;background:#e2e2e2"></div>
<div class="b" style="left:598px;top:434px;width:1px;height:24px;background:#e2e2e2"></div>
<div class="b" style="left:666px;top:434px;width:1px;height:24px;background:#e2e2e2"></div>
<div class="b" style="left:734px;top:434px;width:1px;height:24px;background:#e2e2e2"></div>
<div class="b" style="left:802px;top:434px;width:1px;height:24px;background:#e2e2e2"></div>
<div class="b" style="left:878px;top:434px;width:1px;height:24px;background:#e2e2e2"></div>
<div class="b" style="left:257px;top:458px;width:1px;height:24px;background:#e2e2e2"></div>
<div class="b" style="left:325px;top:458px;width:1px;height:24px;background:#e2e2e2"></div>
<div class="b" style="left:394px;top:458px;width:1px;height:24px;background:#e2e2e2"></div>
<div class="b" style="left:464px;top:458px;width:1px;height:24px;background:#e2e2e2"></div>
<div class="b" style="left:532px;top:458px;width:1px;height:24px;background:#e2e2e2"></div>
<div class="b" style="left:598px;top:458px;width:1px;height:24px;background:#e2e2e2"></div>
<div class="b" style="left:666px;top:458px;width:1px;height:24px;background:#e2e2e2"></div>
<div class="b" style="left:734px;top:458px;width:1px;height:24px;background:#e2e2e2"></div>
<div class="b" style="left:802px;top:458px;width:1px;height:24px;background:#e2e2e2"></div>
<div class="b" style="left:878px;top:458px;width:1px;height:24px;background:#e2e2e2"></div>
<div class="b" style="left:257px;top:482px;width:1px;height:23px;background:#e2e2e2"></div>
<div class="b" style="left:394px;top:482px;width:1px;height:23px;background:#e2e2e2"></div>
<div class="b" style="left:464px;top:482px;width:1px;height:23px;background:#e2e2e2"></div>
<div class="b" style="left:598px;top:482px;width:1px;height:23px;background:#e2e2e2"></div>
<div class="b" style="left:666px;top:482px;width:1px;height:23px;background:#e2e2e2"></div>
<div class="t" style="left:158px;width:300px;text-align:right;top:483.5px;font-size:9px;color:#6e6e6e;font-weight:400;">RM</div>
<div class="t" style="left:360px;width:300px;text-align:right;top:483.9px;font-size:9px;color:#6e6e6e;font-weight:400;letter-spacing:-0.35px">综合光心距</div>
<div class="b" style="left:257px;top:505px;width:1px;height:24px;background:#e2e2e2"></div>
<div class="b" style="left:394px;top:505px;width:1px;height:24px;background:#e2e2e2"></div>
<div class="b" style="left:464px;top:505px;width:1px;height:24px;background:#e2e2e2"></div>
<div class="b" style="left:598px;top:505px;width:1px;height:24px;background:#e2e2e2"></div>
<div class="b" style="left:666px;top:505px;width:1px;height:24px;background:#e2e2e2"></div>
<div class="t" style="left:158px;width:300px;text-align:right;top:507.0px;font-size:9px;color:#6e6e6e;font-weight:400;">LM</div>
<div class="t" style="left:360px;width:300px;text-align:right;top:507.4px;font-size:9px;color:#6e6e6e;font-weight:400;letter-spacing:-0.35px">佩戴年限</div>
<div class="b" style="left:257px;top:529px;width:1px;height:26px;background:#e2e2e2"></div>
<div class="b" style="left:464px;top:529px;width:1px;height:26px;background:#e2e2e2"></div>
<div class="b" style="left:532px;top:529px;width:1px;height:26px;background:#e2e2e2"></div>
<div class="b" style="left:263px;top:534.8px;width:14.5px;height:14.5px;border:1px solid #dbd7d0;border-radius:50%"></div>
<div class="t" style="left:277.5px;top:532.6px;font-size:9px;color:#6e6e6e;font-weight:400;letter-spacing:-0.35px">原镜</div>
<div class="b" style="left:339px;top:534.8px;width:14.5px;height:14.5px;border:1px solid #dbd7d0;border-radius:50%"></div>
<div class="t" style="left:353.5px;top:532.6px;font-size:9px;color:#6e6e6e;font-weight:400;letter-spacing:-0.35px">来方</div>
<div class="b" style="left:416px;top:534.8px;width:14.5px;height:14.5px;border:1px solid #dbd7d0;border-radius:50%"></div>
<div class="t" style="left:430.5px;top:532.6px;font-size:9px;color:#6e6e6e;font-weight:400;letter-spacing:-0.35px">口述</div>
<div class="t" style="left:226px;width:300px;text-align:right;top:532.4px;font-size:9px;color:#6e6e6e;font-weight:400;letter-spacing:-0.35px">备注信息</div>
<div class="t" style="left:541.5px;top:532.0px;font-size:9px;color:#9e9e9e;font-weight:400;">请输入</div>
<div class="b" style="left:768px;top:512px;width:46px;height:22px;background:#f2f2f2;border:1px solid #e4e4e4;border-radius:2px"></div>
<div class="b" style="left:775px;top:517px;width:15px;height:14px;background:#5cc26f"></div>
<svg style="left:0;top:0" width="950" height="545"><path d="M778.6 523.8 L781.4 526.6 L786 521.4" fill="none" stroke="#fff" stroke-width="1.5"/></svg>
<div class="t" style="left:790px;top:513.0px;font-size:8.9px;color:#777;font-weight:400;">打印</div>
<div class="b" style="left:821px;top:512px;width:63px;height:22px;background:#5cc26f;border-radius:3px"></div>
<div class="t" style="left:702.8px;width:300px;text-align:center;top:513.0px;font-size:9.2px;color:#fff;font-weight:400;">保存并开单</div>
<div class="b" style="left:891.5px;top:512px;width:35.5px;height:22px;background:#5cc26f;border-radius:3px"></div>
<div class="t" style="left:759.3px;width:300px;text-align:center;top:513.0px;font-size:9.5px;color:#fff;font-weight:400;">保存</div>
<svg style="left:0;top:0" width="950" height="545"><polygon points="21.30,507.07 23.99,511.02 28.77,511.04 25.85,514.83 27.30,519.38 22.80,517.76 18.92,520.56 19.06,515.78 15.21,512.95 19.80,511.61" fill="#f2cf4a" stroke="#111" stroke-width="0.5" stroke-linejoin="round"/><polygon points="37.13,487.25 37.79,489.55 40.06,490.30 38.09,491.65 38.08,494.04 36.19,492.57 33.91,493.30 34.72,491.05 33.32,489.11 35.71,489.18" fill="#f2cf4a" stroke="#111" stroke-width="0.5" stroke-linejoin="round"/><polygon points="87.13,486.58 89.10,489.25 92.41,489.15 90.48,491.85 91.60,494.97 88.43,493.96 85.81,495.99 85.79,492.67 83.05,490.80 86.20,489.76" fill="#f2cf4a" stroke="#111" stroke-width="0.5" stroke-linejoin="round"/><polygon points="100.24,506.06 100.87,509.19 103.79,510.45 101.01,512.01 100.72,515.18 98.38,513.02 95.27,513.72 96.60,510.83 94.97,508.09 98.14,508.46" fill="#f2cf4a" stroke="#111" stroke-width="0.5" stroke-linejoin="round"/><polygon points="93.60,527.60 94.31,529.03 95.88,529.26 94.74,530.37 95.01,531.94 93.60,531.20 92.19,531.94 92.46,530.37 91.32,529.26 92.89,529.03" fill="#f2cf4a" stroke="#111" stroke-width="0.5" stroke-linejoin="round"/><polygon points="40.90,535.80 41.78,537.59 43.75,537.87 42.33,539.26 42.66,541.23 40.90,540.30 39.14,541.23 39.47,539.26 38.05,537.87 40.02,537.59" fill="#f2cf4a" stroke="#111" stroke-width="0.5" stroke-linejoin="round"/><rect x="632.5" y="8.8" width="15.2" height="15.8" fill="#4caf50"/><g transform="rotate(40 640 16.6)"><path d="M635.4 20.8 Q637 19.4 637.2 15 Q637.4 10 640 9.6 Q642.6 10 642.8 15 Q643 19.4 644.6 20.8 Z" fill="#fff"/><path d="M637.6 15.4 Q640 13.6 642.4 15.4" fill="none" stroke="#4caf50" stroke-width="0.5"/><rect x="639.1" y="20.6" width="1.8" height="2.6" fill="#fff"/></g><rect x="649.8" y="4.4" width="23" height="8.8" rx="4.4" fill="#e23b1e"/><text x="661.3" y="11.9" font-family="Liberation Sans" font-weight="bold" font-size="9" fill="#fff" text-anchor="middle">1341</text><defs><linearGradient id="og" x1="0" y1="0" x2="0" y2="1"><stop offset="0" stop-color="#fbbb3c"/><stop offset="1" stop-color="#f5a02a"/></linearGradient><linearGradient id="pg" x1="0" y1="0" x2="1" y2="1"><stop offset="0" stop-color="#a27cf6"/><stop offset="1" stop-color="#7a6cf2"/></linearGradient></defs><rect x="690.2" y="8.6" width="15.4" height="15.9" rx="1" fill="url(#og)"/><path d="M693.6 13 H701.8 L702 21.4 H693.3 Z" fill="#fff"/><path d="M695.8 13 Q697.6 9.6 699.6 13" fill="none" stroke="#fff" stroke-width="0.9"/><path d="M701.5 12.4 L703 13.8" stroke="#fff" stroke-width="1"/><circle cx="697.6" cy="17.2" r="1.4" fill="#f5ab2e"/><rect x="748.2" y="8.4" width="15.4" height="16.1" rx="1.2" fill="#fbfdfb"/><path d="M760.6 14.2 H752.4 M754.6 11.8 L751.6 14.2 L754.6 16.6" fill="none" stroke="#52c165" stroke-width="1.5" stroke-linejoin="round"/><path d="M751.4 19 H759.4 M757.4 16.6 L760.4 19 L757.4 21.4" fill="none" stroke="#52c165" stroke-width="1.5" stroke-linejoin="round"/><rect x="806.2" y="8.6" width="15.4" height="15.9" rx="1" fill="url(#pg)"/><path d="M812.6 12 H815.2 V15.6 H817.2 L813.9 19 L810.6 15.6 H812.6 Z" fill="#fff"/><rect x="809.6" y="20.6" width="8.6" height="1.2" fill="#fff"/><rect x="864.2" y="8.4" width="15.4" height="16.1" rx="1.2" fill="#fbfdfb"/><circle cx="872" cy="14.8" r="2.3" fill="#52c165"/><path d="M868.4 15.6 Q868.2 11.2 872 11 Q875.8 11.2 875.6 15.6" fill="none" stroke="#52c165" stroke-width="0.9"/><rect x="867.4" y="14.4" width="1.3" height="2.4" rx="0.5" fill="#52c165"/><rect x="875.3" y="14.4" width="1.3" height="2.4" rx="0.5" fill="#52c165"/><path d="M867.2 21.4 Q869 18.4 872 19.2 Q875 18.4 876.8 21.4 Z" fill="#52c165"/><circle cx="929.5" cy="18" r="9.6" fill="#f7efed"/><path d="M921.6 22.6 Q920.2 10 929.5 10.2 Q938.8 10 937.4 22.6 L935.8 22.6 Q935.6 17.4 934.6 15.6 L924.4 15.6 Q923.4 17.4 923.2 22.6 Z" fill="#2aa2ac"/><ellipse cx="929.5" cy="19.4" rx="4.6" ry="4.5" fill="#f4d8cb"/><path d="M924.6 16.6 Q926.5 12.4 929.6 12.6 Q933.2 12.6 934.6 16.6 Q931.5 15.2 929.4 14.8 Q927 15.4 924.6 16.6 Z" fill="#2aa2ac"/><circle cx="927.5" cy="18.8" r="1.5" fill="none" stroke="#b8a49c" stroke-width="0.45"/><circle cx="931.6" cy="18.8" r="1.5" fill="none" stroke="#b8a49c" stroke-width="0.45"/><circle cx="922.8" cy="23.4" r="2" fill="#2aa2ac"/><circle cx="936.2" cy="23.4" r="2" fill="#2aa2ac"/><path d="M925.6 25.4 H933.4 V27.4 H925.6 Z" fill="#f2a62c"/><rect x="928.1" y="24.8" width="2.8" height="2.8" fill="#1b2140"/><path d="M305 55 H308 L307.4 56 V58.6 L308.6 60 H304.4 L305.6 58.6 V56 Z M306.5 60 V62.8" fill="#bcbcbc" stroke="#bcbcbc" stroke-width="0.5"/><circle cx="317.4" cy="57.9" r="3.9" fill="#c6c6c6"/><path d="M315.8 56.3 L319 59.5 M319 56.3 L315.8 59.5" stroke="#fafafa" stroke-width="1"/><path d="M394 55.3 H397.4 L396.8 56.3 V58.9 L398 60.3 H393.4 L394.6 58.9 V56.3 Z M395.6 60.3 V63" fill="#dedede" stroke="#dedede" stroke-width="0.5"/><circle cx="406.7" cy="58.1" r="4.4" fill="#e2e2e2"/><path d="M405 56.4 L408.4 59.8 M408.4 56.4 L405 59.8" stroke="#555" stroke-width="1.1"/><path d="M133.4 55.2 L129.4 59.2 L133.4 63.2 M137 55.2 L133 59.2 L137 63.2" fill="none" stroke="#c8c8c8" stroke-width="1.2"/><path d="M888.4 55.2 L892.4 59.2 L888.4 63.2 M892 55.2 L896 59.2 L892 63.2" fill="none" stroke="#c8c8c8" stroke-width="1.2"/><path d="M645.2 138.6 L647.8 141.2 L650.4 138.6" fill="none" stroke="#777" stroke-width="0.9"/><rect x="913.8" y="134.8" width="12" height="10.4" rx="1.4" fill="none" stroke="#6cbcf0" stroke-width="1.1"/><path d="M913.8 137.6 H925.8" stroke="#6cbcf0" stroke-width="1.4"/><path d="M916.6 133.6 V135.6 M923 133.6 V135.6" stroke="#6cbcf0" stroke-width="1"/><rect x="916.4" y="139.6" width="1.3" height="1.3" fill="#8ccaf2"/><rect x="918.8" y="139.6" width="1.3" height="1.3" fill="#8ccaf2"/><rect x="921.2" y="139.6" width="1.3" height="1.3" fill="#8ccaf2"/><rect x="923.4" y="139.6" width="1.3" height="1.3" fill="#8ccaf2"/><rect x="916.4" y="142.4" width="1.3" height="1.3" fill="#8ccaf2"/><rect x="918.8" y="142.4" width="1.3" height="1.3" fill="#8ccaf2"/><rect x="921.2" y="142.4" width="1.3" height="1.3" fill="#8ccaf2"/><rect x="923.4" y="142.4" width="1.3" height="1.3" fill="#8ccaf2"/><path d="M130 250.5 L125.2 255 L130 259.5" fill="none" stroke="#444" stroke-width="1.6"/></svg>
<div class="b" style="left:38.5px;top:491px;width:47.0px;height:47px;background:#5ec470;border-radius:50%;border:1px solid #161616"></div>
<svg style="left:0;top:0" width="120" height="545"><path d="M50.2 502.2 Q56 500.6 61.6 502.6 V518.4 Q56 516.4 50.2 518 Z" fill="#fff"/><path d="M63 502.6 Q68.6 500.6 74.4 502.2 V518 Q68.6 516.4 63 518.4 Z" fill="#fff"/></svg>
<div class="t" style="left:-88px;width:300px;text-align:center;top:513.7px;font-size:7px;color:#fff;font-weight:400;">软件教程</div>
</div></body></html>
